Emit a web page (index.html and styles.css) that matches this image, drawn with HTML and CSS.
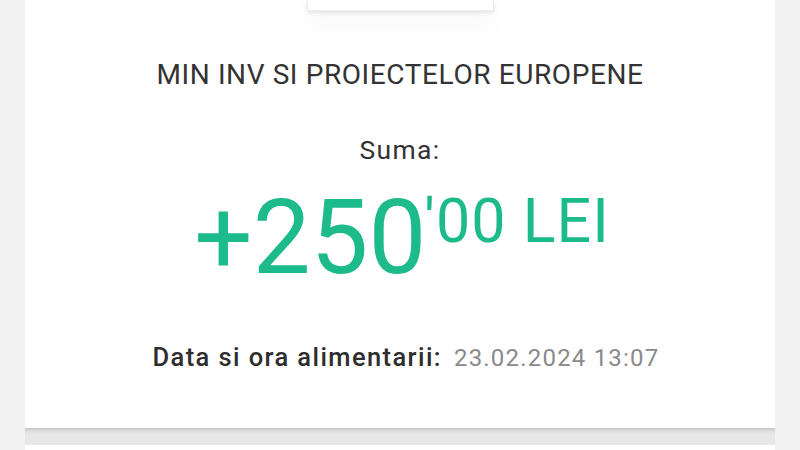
FILE: index.html
```html
<!DOCTYPE html>
<html>
<head>
<meta charset="utf-8">
<link rel="stylesheet" href="styles.css">
</head>
<body>
<div class="page">
  <div class="card">
    <div class="logo-box"></div>
    <div class="name">MIN INV SI PROIECTELOR EUROPENE</div>
    <div class="label">Suma:</div>
    <div class="amount"><span class="int">+250</span><span class="dec">'00 LEI</span></div>
    <div class="date"><span class="date-label">Data si ora alimentarii:</span><span class="date-value">23.02.2024 13:07</span></div>
  </div>
  <div class="separator"></div>
  <div class="card next"></div>
</div>
</body>
</html>
```
FILE: styles.css
```css
html, body {
  margin: 0;
  padding: 0;
  background: #f2f2f2;
  font-family: Roboto, "Liberation Sans", sans-serif;
}
.page {
  width: 750px;
  margin: 0 auto;
  height: 450px;
  overflow: hidden;
  display: flex;
  flex-direction: column;
}
.card {
  background: #ffffff;
  height: 428px;
  display: flex;
  flex-direction: column;
  align-items: center;
  flex-shrink: 0;
}
.logo-box {
  width: 187px;
  height: 11px;
  background: #fff;
  box-shadow: 0 2px 4px rgba(0,0,0,0.10), 0 10px 28px rgba(0,0,0,0.06);
  border: 1px solid #ececec;
  border-top: none;
  box-sizing: border-box;
}
.name {
  margin-top: 48px;
  font-size: 28px;
  letter-spacing: 0.6px;
  color: #333333;
  line-height: 32px;
}
.label {
  margin-top: 44px;
  font-size: 26.5px;
  letter-spacing: 1.3px;
  color: #333333;
  line-height: 30px;
}
.amount {
  margin-top: 21px;
  margin-left: 4px;
  color: #1dbb8b;
  display: flex;
  align-items: flex-start;
  line-height: 1;
}
.int {
  font-size: 103px;
  letter-spacing: 0;
}
.dec {
  font-size: 61px;
  margin-top: 5px;
  margin-left: -2px;
  letter-spacing: 1px;
}
.date {
  margin-top: 53px;
  margin-left: 12px;
  font-size: 25.5px;
  line-height: 30px;
  display: flex;
  align-items: baseline;
  gap: 12px;
}
.date-label {
  color: #2e2e2e;
  font-weight: 500;
  letter-spacing: 1.4px;
}
.date-value {
  color: #8a8a8a;
  font-size: 24px;
  letter-spacing: 1.2px;
}
.separator {
  height: 17px;
  flex-shrink: 0;
  background: linear-gradient(#c4c4c4 0, #d8d8d8 2px, #e6e6e6 5px, #e8e8e8 100%);
}
.next {
  height: 40px;
}
```
